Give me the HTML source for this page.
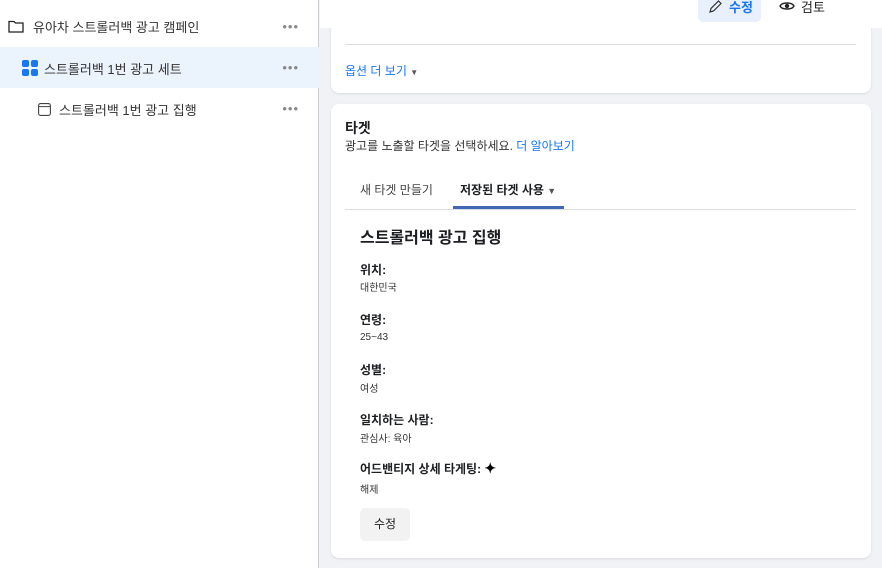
<!DOCTYPE html>
<html><head><meta charset="utf-8"><style>
*{margin:0;padding:0;box-sizing:border-box}
body{width:882px;height:568px;overflow:hidden;background:#f0f2f5;font-family:"Liberation Sans","Noto Sans CJK KR",sans-serif;color:#1c1e21;position:relative}
.a{position:absolute;white-space:nowrap}
#side{position:absolute;left:0;top:0;width:319px;height:568px;background:#fff;border-right:1px solid #ccd0d5}
.row{position:absolute;left:0;width:319px;height:41px;font-size:13px;color:#333}
.dots{position:absolute;right:20px;top:13px;font-size:13px;color:#888;letter-spacing:1px}
.card{position:absolute;left:331px;width:540px;background:#fff;border-radius:8px;box-shadow:0 1px 2px rgba(0,0,0,.1)}
.lab{font-size:12px;font-weight:bold;color:#1c1e21}
.val{font-size:10px;color:#333}
</style></head><body>
<div id="side">
 <div class="row" style="top:6px">
  <svg class="a" style="left:8px;top:13px" width="16" height="14" viewBox="0 0 16 14"><path d="M1 2.5h5l1.5 1.5H15v9H1z" fill="none" stroke="#222" stroke-width="1.3"/></svg>
  <span class="a" style="left:33px;top:11px">유아차 스트롤러백 광고 캠페인</span><span class="dots">•••</span></div>
 <div class="row" style="top:47px;background:#ebf3fc">
  <svg class="a" style="left:22px;top:13px" width="16" height="16" viewBox="0 0 16 16" fill="#1877f2"><rect x="0" y="0" width="7" height="7" rx="2"/><rect x="9" y="0" width="7" height="7" rx="2"/><rect x="0" y="9" width="7" height="7" rx="2"/><rect x="9" y="9" width="7" height="7" rx="2"/></svg>
  <span class="a" style="left:44px;top:12px">스트롤러백 1번 광고 세트</span><span class="dots">•••</span></div>
 <div class="row" style="top:88px">
  <svg class="a" style="left:38px;top:15px" width="13" height="13" viewBox="0 0 13 13"><rect x="0.6" y="0.6" width="11.8" height="11.8" rx="2" fill="none" stroke="#444" stroke-width="1.1"/><path d="M1 3.6h11" stroke="#444"/></svg>
  <span class="a" style="left:59px;top:12px">스트롤러백 1번 광고 집행</span><span class="dots">•••</span></div>
</div>
<div class="card" style="top:-10px;height:103px">
 <div class="a" style="left:14px;top:54px;width:511px;height:1px;background:#dadde1"></div>
 <span class="a" style="left:14px;top:72px;font-size:12px;color:#1877f2">옵션 더 보기 <span style="font-size:8px;color:#555">▼</span></span>
</div>
<div class="a" style="left:320px;top:0;width:562px;height:28px;background:#fff"></div>
<div class="a" style="left:698px;top:-6px;width:63px;height:28px;background:#e7f0fc;border-radius:5px"></div>
<svg class="a" style="left:707px;top:-1px" width="16" height="16" viewBox="0 0 16 16"><path d="M3 13l1-3.5L11.5 2l2.5 2.5L6.5 12z" fill="none" stroke="#333" stroke-width="1.2"/></svg>
<span class="a" style="left:729px;top:-3px;font-size:13px;font-weight:bold;color:#1877f2">수정</span>
<svg class="a" style="left:779px;top:0px" width="16" height="12" viewBox="0 0 16 12"><path d="M1 6c2-4 12-4 14 0c-2 4-12 4-14 0z" fill="none" stroke="#222" stroke-width="1.4"/><circle cx="8" cy="6" r="2.2" fill="#222"/></svg>
<span class="a" style="left:801px;top:-3px;font-size:13px;color:#222">검토</span>
<div class="card" style="top:104px;height:454px">
 <span class="a" style="left:14px;top:14px;font-size:14px;font-weight:bold">타겟</span>
 <span class="a" style="left:14px;top:33px;font-size:12px;color:#333">광고를 노출할 타겟을 선택하세요. <span style="color:#1877f2">더 알아보기</span></span>
 <span class="a" style="left:29px;top:77px;font-size:12px;color:#444">새 타겟 만들기</span>
 <span class="a" style="left:129px;top:77px;font-size:12px;font-weight:bold">저장된 타겟 사용 <span style="font-size:9px;color:#555">▼</span></span>
 <div class="a" style="left:14px;top:105px;width:511px;height:1px;background:#dadde1"></div>
 <div class="a" style="left:122px;top:102px;width:111px;height:3px;background:#4267b2"></div>
 <span class="a" style="left:29px;top:120px;font-size:16px;font-weight:bold">스트롤러백 광고 집행</span>
 <span class="a lab" style="left:29px;top:157px">위치:</span><span class="a val" style="left:29px;top:175px">대한민국</span>
 <span class="a lab" style="left:29px;top:207px">연령:</span><span class="a val" style="left:29px;top:228px">25~43</span>
 <span class="a lab" style="left:29px;top:257px">성별:</span><span class="a val" style="left:29px;top:276px">여성</span>
 <span class="a lab" style="left:29px;top:307px">일치하는 사람:</span><span class="a val" style="left:29px;top:326px">관심사: 육아</span>
 <span class="a lab" style="left:29px;top:356px">어드밴티지 상세 타게팅: <span style="font-size:14px;color:#000">✦</span></span><span class="a val" style="left:29px;top:377px">해제</span>
 <div class="a" style="left:29px;top:404px;width:50px;height:33px;background:#f2f2f2;border-radius:5px;font-size:12px;text-align:center;line-height:33px">수정</div>
</div>
</body></html>
